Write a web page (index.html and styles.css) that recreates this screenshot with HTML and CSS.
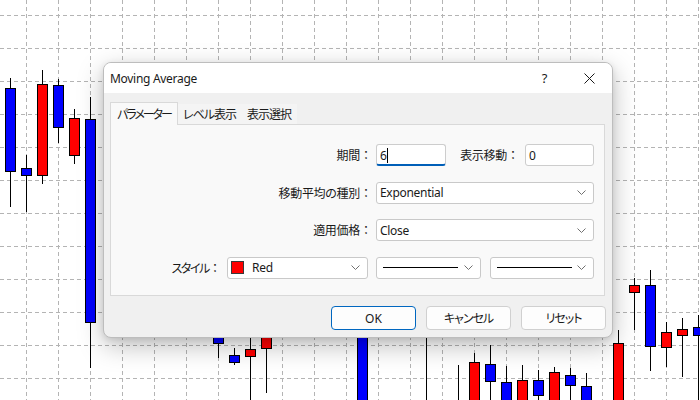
FILE: index.html
```html
<!DOCTYPE html>
<html lang="ja">
<head>
<meta charset="utf-8">
<title>Moving Average</title>
<link rel="stylesheet" href="styles.css">
</head>
<body>
<svg class="chart" width="700" height="400" viewBox="0 0 700 400">
  <g class="grid">
    <path d="M26.5 0V400M58.5 0V400M90.5 0V400M122.5 0V400M154.5 0V400M186.5 0V400M218.5 0V400M250.5 0V400M282.5 0V400M314.5 0V400M346.5 0V400M378.5 0V400M410.5 0V400M442.5 0V400M474.5 0V400M506.5 0V400M538.5 0V400M570.5 0V400M602.5 0V400M634.5 0V400M666.5 0V400M698.5 0V400"/>
    <path d="M0 15.5H700M0 48.5H700M0 81.5H700M0 114.5H700M0 147.5H700M0 180.5H700M0 213.5H700M0 246.5H700M0 279.5H700M0 312.5H700M0 345.5H700M0 378.5H700"/>
  </g>
  <g class="wicks">
    <path d="M10.5 78V207M26.5 155V212M42.5 70V184M58.5 79V143M74.5 109V164M90.5 97V368M218.5 300V358M234.5 348V365M250.5 320V405M266.5 320V393M362.5 300V405M426.5 300V405M458.5 365V405M474.5 353V405M490.5 345V405M506.5 366V405M522.5 365V405M538.5 370V405M554.5 367V405M570.5 368V405M586.5 373V405M618.5 330V405M634.5 278V330M650.5 270V371M666.5 322V367M682.5 318V377M698.5 315V405"/>
  </g>
  <g class="bodies">
    <rect class="up" x="5.5" y="88.5" width="10" height="83"/>
    <rect class="up" x="21.5" y="168.5" width="10" height="7"/>
    <rect class="dn" x="37.5" y="84.5" width="10" height="91"/>
    <rect class="up" x="53.5" y="85.5" width="10" height="42"/>
    <rect class="dn" x="69.5" y="118.5" width="10" height="37"/>
    <rect class="up" x="85.5" y="119.5" width="10" height="203"/>
    <rect class="up" x="213.5" y="320.5" width="10" height="23"/>
    <rect class="up" x="229.5" y="355.5" width="10" height="7"/>
    <rect class="dn" x="245.5" y="349.5" width="10" height="7"/>
    <rect class="dn" x="261.5" y="320.5" width="10" height="28"/>
    <rect class="up" x="357.5" y="310.5" width="10" height="100"/>
    <rect class="dn" x="469.5" y="362.5" width="10" height="50"/>
    <rect class="up" x="485.5" y="364.5" width="10" height="17"/>
    <rect class="up" x="501.5" y="382.5" width="10" height="30"/>
    <rect class="dn" x="517.5" y="380.5" width="10" height="30"/>
    <rect class="up" x="533.5" y="380.5" width="10" height="15"/>
    <rect class="dn" x="549.5" y="372.5" width="10" height="40"/>
    <rect class="up" x="565.5" y="375.5" width="10" height="10"/>
    <rect class="up" x="581.5" y="386.5" width="10" height="30"/>
    <rect class="dn" x="613.5" y="343.5" width="10" height="70"/>
    <rect class="dn" x="629.5" y="285.5" width="10" height="7"/>
    <rect class="up" x="645.5" y="285.5" width="10" height="61"/>
    <rect class="dn" x="661.5" y="332.5" width="10" height="15"/>
    <rect class="dn" x="677.5" y="329.5" width="10" height="6"/>
    <rect class="up" x="693.5" y="327.5" width="10" height="8"/>
  </g>
</svg>

<div class="dialog">
  <div class="titlebar">
    <span class="title">Moving Average</span>
    <span class="tb-btn help">?</span>
    <span class="tb-btn close">
      <svg width="11" height="11" viewBox="0 0 11 11"><path d="M0.5 0.5L10.5 10.5M10.5 0.5L0.5 10.5"/></svg>
    </span>
  </div>
  <div class="content">
    <div class="tabs">
      <div class="tab active">パラメーター</div>
      <div class="tab">レベル表示</div>
      <div class="tab">表示選択</div>
    </div>
    <div class="panel">
      <div class="form">
        <span class="label">期間<span class="colon">：</span></span>
        <div class="pair">
          <div class="input focused w70">6<span class="caret"></span></div>
          <span class="label inline">表示移動<span class="colon">：</span></span>
          <div class="input w69">0</div>
        </div>
        <span class="label">移動平均の種別<span class="colon">：</span></span>
        <div class="select">
          <span class="val">Exponential</span>
          <svg class="chev" width="9" height="5" viewBox="0 0 9 5"><path d="M0.5 0.5L4.5 4.5L8.5 0.5"/></svg>
        </div>
        <span class="label">適用価格<span class="colon">：</span></span>
        <div class="select">
          <span class="val">Close</span>
          <svg class="chev" width="9" height="5" viewBox="0 0 9 5"><path d="M0.5 0.5L4.5 4.5L8.5 0.5"/></svg>
        </div>
      </div>
      <div class="style-row">
        <span class="label kana">スタイル<span class="colon">：</span></span>
        <div class="select color">
          <span class="swatch"></span>
          <span class="val">Red</span>
          <svg class="chev" width="9" height="5" viewBox="0 0 9 5"><path d="M0.5 0.5L4.5 4.5L8.5 0.5"/></svg>
        </div>
        <div class="select line w105">
          <span class="stroke"></span>
          <svg class="chev" width="9" height="5" viewBox="0 0 9 5"><path d="M0.5 0.5L4.5 4.5L8.5 0.5"/></svg>
        </div>
        <div class="select line w104">
          <span class="stroke"></span>
          <svg class="chev" width="9" height="5" viewBox="0 0 9 5"><path d="M0.5 0.5L4.5 4.5L8.5 0.5"/></svg>
        </div>
      </div>
    </div>
    <div class="buttons">
      <button class="btn default">OK</button>
      <button class="btn kana">キャンセル</button>
      <button class="btn kana">リセット</button>
    </div>
  </div>
</div>
</body>
</html>
```

FILE: styles.css
```css
html, body {
  margin: 0;
  padding: 0;
}

body {
  width: 700px;
  height: 400px;
  position: relative;
  overflow: hidden;
  background: #ffffff;
  font-family: "Noto Sans", "Noto Sans CJK JP", sans-serif;
  font-feature-settings: "palt";
  letter-spacing: -0.3px;
  color: #1a1a1a;
}

.chart {
  display: block;
}

.grid path {
  fill: none;
  stroke: #b4b4b4;
  stroke-width: 1;
  stroke-dasharray: 4 3;
}

.wicks path {
  fill: none;
  stroke: #000;
  stroke-width: 1;
}

.bodies rect {
  stroke: #000;
  stroke-width: 1;
}

.bodies .up {
  fill: #0000ff;
}

.bodies .dn {
  fill: #ff0000;
}

/* dialog */
.dialog {
  position: absolute;
  left: 103px;
  top: 62px;
  width: 510px;
  height: 276px;
  box-sizing: border-box;
  background: #f0f0f0;
  border: 1px solid #bdbdbd;
  border-radius: 8px;
  box-shadow: 0 8px 26px rgba(0, 0, 0, 0.26), 0 2px 6px rgba(0, 0, 0, 0.10);
  display: flex;
  flex-direction: column;
  overflow: hidden;
}

.titlebar {
  height: 30px;
  flex: none;
  background: #ffffff;
  display: flex;
  align-items: center;
}

.title {
  flex: 1;
  padding-left: 6px;
  font-size: 12px;
  color: #1a1a1a;
}

.tb-btn {
  width: 45px;
  height: 30px;
  display: flex;
  align-items: center;
  justify-content: center;
  font-size: 13px;
  color: #1a1a1a;
}

.close svg path {
  stroke: #1a1a1a;
  stroke-width: 1;
  fill: none;
}

.content {
  flex: 1;
  padding: 9px 7px 0 6px;
  display: flex;
  flex-direction: column;
}

.tabs {
  display: flex;
  align-items: flex-end;
  height: 23px;
  margin-bottom: -1px;
  position: relative;
  z-index: 1;
}

.tab {
  height: 20px;
  box-sizing: border-box;
  padding: 0 6px 0 5px;
  display: flex;
  align-items: center;
  font-size: 12px;
  letter-spacing: -1px;
  color: #1a1a1a;
  background: #f4f4f4;
  margin-bottom: 1px;
}

.tab.active {
  height: 23px;
  margin-bottom: 0;
  padding: 0 6px 1px 6px;
  letter-spacing: -2px;
  background: #f9f9f9;
  border: 1px solid #d9d9d9;
  border-bottom: none;
}

.panel {
  height: 172px;
  box-sizing: border-box;
  background: #f9f9f9;
  border: 1px solid #d9d9d9;
  padding: 19px 10px 0 0;
}

.form {
  display: grid;
  grid-template-columns: 1fr 218px;
  grid-auto-rows: 22px;
  column-gap: 4px;
  row-gap: 15.5px;
  align-items: center;
}

.label {
  justify-self: end;
  font-size: 12px;
  color: #1a1a1a;
  white-space: nowrap;
}

.colon {
  font-feature-settings: normal;
  letter-spacing: 0;
}

.kana {
  letter-spacing: -1.4px;
}

.pair {
  display: flex;
  align-items: center;
  height: 22px;
}

.label.inline {
  margin-left: auto;
  margin-right: 6px;
}

.input {
  height: 22px;
  box-sizing: border-box;
  background: #ffffff;
  border: 1px solid #cdcdcd;
  border-radius: 3px;
  padding: 0 3px;
  font-size: 12px;
  display: flex;
  align-items: center;
}

.input.focused {
  border-bottom: 2px solid #005fb8;
  padding-top: 1px;
}

.w70 {
  width: 70px;
}

.w69 {
  width: 69px;
}

.caret {
  display: inline-block;
  width: 1px;
  height: 15px;
  background: #000;
  margin-left: 0;
}

.select {
  height: 22px;
  box-sizing: border-box;
  background: #ffffff;
  border: 1px solid #c9c9c9;
  border-radius: 3px;
  padding: 0 7px 0 3px;
  display: flex;
  align-items: center;
  font-size: 12px;
}

.select .val {
  flex: 1;
}

.chev {
  flex: none;
}

.chev path {
  fill: none;
  stroke: #707070;
  stroke-width: 1;
}

.style-row {
  display: flex;
  justify-content: flex-end;
  align-items: center;
  height: 22px;
  margin-top: 15.5px;
}

.style-row .label {
  margin-right: 6px;
}

.select.color {
  width: 141px;
  padding-left: 3px;
}

.swatch {
  width: 11px;
  height: 11px;
  background: #ff0000;
  border: 1px solid #3a3a3a;
  margin-right: 8px;
  flex: none;
}

.select.line {
  margin-left: 8px;
  padding-left: 6px;
}

.select.w105 {
  width: 105px;
}

.select.w104 {
  width: 104px;
  margin-left: 9px;
}

.stroke {
  flex: none;
  width: 75px;
  height: 1px;
  background: #000;
  margin-right: auto;
}

.buttons {
  display: flex;
  justify-content: flex-end;
  gap: 10px;
  margin-top: 10px;
  margin-right: -1px;
}

.btn {
  width: 85px;
  height: 24px;
  box-sizing: border-box;
  background: #fdfdfd;
  border: 1px solid #d0d0d0;
  border-radius: 4px;
  font-family: inherit;
  font-feature-settings: "palt";
  font-size: 12px;
  color: #1a1a1a;
  padding: 0;
}

.btn.kana {
  letter-spacing: -1px;
}

.btn.default {
  border-color: #0067c0;
}
```
